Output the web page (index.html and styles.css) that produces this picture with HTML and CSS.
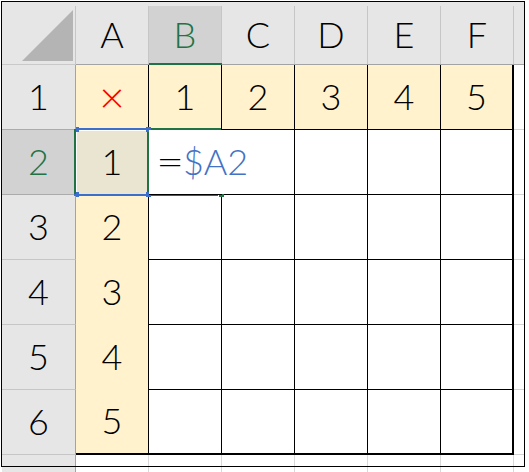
FILE: index.html
```html
<!DOCTYPE html>
<html lang="ja">
<head>
<meta charset="utf-8">
<title>Sheet</title>
<link rel="stylesheet" href="styles.css">
</head>
<body>
<div class="sheet">
  <div class="corner"><div class="corner-in"><svg class="tri" width="51" height="51" viewBox="0 0 51 51"><polygon points="0,51 51,0 51,51" fill="#b4b4b4"/></svg></div></div>
  <div class="ch"><div class="lbl">A</div></div>
  <div class="ch ch-sel"><div class="lbl">B</div></div>
  <div class="ch"><div class="lbl">C</div></div>
  <div class="ch"><div class="lbl">D</div></div>
  <div class="ch"><div class="lbl">E</div></div>
  <div class="ch"><div class="lbl">F</div></div>
  <div class="ch ch-x"><div class="lbl"></div></div>

  <div class="rh">1</div>
  <div class="c ca"><span class="times">×</span></div>
  <div class="c cy">1</div>
  <div class="c cy">2</div>
  <div class="c cy">3</div>
  <div class="c cy">4</div>
  <div class="c cy cf">5</div>
  <div class="c cx"></div>

  <div class="rh rh-sel">2</div>
  <div class="c ca ca-sel">1</div>
  <div class="c cw cb2"><span class="eq">=</span><span class="ref">$A2</span></div>
  <div class="c cw"></div>
  <div class="c cw"></div>
  <div class="c cw"></div>
  <div class="c cw cf"></div>
  <div class="c cx"></div>

  <div class="rh">3</div>
  <div class="c ca">2</div>
  <div class="c cw"></div>
  <div class="c cw"></div>
  <div class="c cw"></div>
  <div class="c cw"></div>
  <div class="c cw cf"></div>
  <div class="c cx"></div>

  <div class="rh">4</div>
  <div class="c ca">3</div>
  <div class="c cw"></div>
  <div class="c cw"></div>
  <div class="c cw"></div>
  <div class="c cw"></div>
  <div class="c cw cf"></div>
  <div class="c cx"></div>

  <div class="rh">5</div>
  <div class="c ca">4</div>
  <div class="c cw"></div>
  <div class="c cw"></div>
  <div class="c cw"></div>
  <div class="c cw"></div>
  <div class="c cw cf"></div>
  <div class="c cx"></div>

  <div class="rh">6</div>
  <div class="c ca last">5</div>
  <div class="c cw last"></div>
  <div class="c cw last"></div>
  <div class="c cw last"></div>
  <div class="c cw last"></div>
  <div class="c cw cf last"></div>
  <div class="c cx"></div>

  <div class="rh rh7">7</div>
  <div class="c c7"></div>
  <div class="c c7"></div>
  <div class="c c7"></div>
  <div class="c c7"></div>
  <div class="c c7"></div>
  <div class="c c7"></div>
  <div class="c c7x"></div>
</div>

<div class="sel g-left"></div>
<div class="sel g-mid"></div>
<div class="sel g-top"></div>
<div class="sel g-bot"></div>
<div class="sel b-top"></div>
<div class="sel b-bot"></div>
<div class="sel h-tl"></div>
<div class="sel h-bl"></div>
<div class="sel h-tr"></div>
<div class="sel h-br"></div>
<div class="sel fill"></div>
<div class="frame"></div>
</body>
</html>
```

FILE: styles.css
```css
html, body {
  margin: 0;
  padding: 0;
  background: #ffffff;
}
body {
  font-family: "Lato", "Noto Sans CJK JP", sans-serif;
  font-size: 36px;
  font-weight: 300;
  color: #000;
  overflow: hidden;
  height: 472px;
}
.sheet {
  margin: 2px 0 0 2px;
  display: grid;
  grid-template-columns: 74px repeat(6, 73px) 10px;
  grid-template-rows: 63px repeat(7, 65px);
}
.sheet > div {
  box-sizing: border-box;
}
/* header row */
.corner, .ch {
  background: #e6e6e6;
  padding-top: 4px;
  border-bottom: 1px solid #a3a3a3;
}
.corner {
  border-bottom-color: #c9c9c9;
}
.corner-in {
  height: 100%;
  box-sizing: border-box;
  border-right: 1px solid #c6c6c6;
  display: flex;
  justify-content: flex-end;
  align-items: flex-end;
  padding: 0 2px 3px 0;
}
.tri { display: block; }
.ch .lbl {
  height: 100%;
  box-sizing: border-box;
  border-right: 1px solid #c6c6c6;
  display: flex;
  align-items: center;
  justify-content: center;
  line-height: 1;
  padding-bottom: 2px;
}
.ch-sel {
  border-bottom: 2px solid #217346;
}
.ch-sel .lbl {
  background: #d2d2d2;
  color: #217346;
}
.ch-x .lbl { border-right: none; }

/* row header */
.rh {
  background: #e6e6e6;
  border-right: 1px solid #a3a3a3;
  border-bottom: 1px solid #c6c6c6;
  display: flex;
  align-items: center;
  justify-content: center;
  line-height: 1;
  padding-bottom: 3px;
}
.rh-sel {
  background: #d2d2d2;
  color: #217346;
  border-bottom-color: #ababab;
  box-shadow: 0 -1px 0 #ababab;
}

/* cells */
.c {
  display: flex;
  align-items: center;
  justify-content: center;
  line-height: 1;
  padding-bottom: 3px;
}
.ca {
  background: #fff2cc;
  border-right: 1px solid #000;
}
.ca-sel {
  background: #e9e5d0;
  box-shadow: inset 1px 1px 0 #ffffff;
}
.cy {
  background: #fff2cc;
  border-right: 1px solid #000;
  border-bottom: 1px solid #000;
}
.cw {
  background: #ffffff;
  border-right: 1px solid #000;
  border-bottom: 1px solid #000;
}
.cf { border-right-width: 2px; }
.last { border-bottom: 2px solid #000; }
.cx {
  background: #ffffff;
  border-bottom: 1px solid #d4d4d4;
}
.c7 {
  background: #fff;
  border-right: 1px solid #d9d9d9;
}
.c7x { background: #fff; }
.rh7 {
  align-items: flex-start;
  padding-top: 14px;
  padding-bottom: 0;
}
.times {
  color: #ff0000;
  font-size: 44px;
  font-weight: 300;
}
.cb2 {
  justify-content: flex-start;
  padding-left: 7px;
  white-space: nowrap;
  border-right: none;
  z-index: 1;
}
.eq {
  color: #000;
  display: inline-block;
  transform: scaleX(1.35);
  transform-origin: left center;
  margin-right: 6px;
}
.ref { color: #4472c4; }

/* selection overlays */
.sel { position: absolute; }
.g-left { left: 74px; top: 129px; width: 2px; height: 65px; background: #217346; }
.g-mid  { left: 147px; top: 130px; width: 2px; height: 62px; background: #217346; }
.g-top  { left: 149px; top: 128px; width: 72px; height: 2px; background: #217346; }
.g-bot  { left: 151px; top: 194px; width: 67px; height: 2px; background: #217346; }
.b-top  { left: 76px; top: 128px; width: 71px; height: 2px; background: #3b6fcb; }
.b-bot  { left: 74px; top: 194px; width: 73px; height: 2px; background: #3b6fcb; }
.h-tl   { left: 76px; top: 127px; width: 3px; height: 5px; background: #3b6fcb; }
.h-bl   { left: 76px; top: 192px; width: 3px; height: 5px; background: #3b6fcb; }
.h-tr   { left: 146px; top: 127px; width: 5px; height: 5px; background: #3b6fcb; }
.h-br   { left: 146px; top: 192px; width: 5px; height: 5px; background: #3b6fcb; }
.fill   { left: 218px; top: 194px; width: 5px; height: 3px; background: #217346; border-left: 1px solid #fff; }
.frame {
  position: absolute;
  left: 1px;
  top: 1px;
  width: 524px;
  height: 466px;
  box-sizing: border-box;
  border: 1px solid #000;
  pointer-events: none;
}
```
